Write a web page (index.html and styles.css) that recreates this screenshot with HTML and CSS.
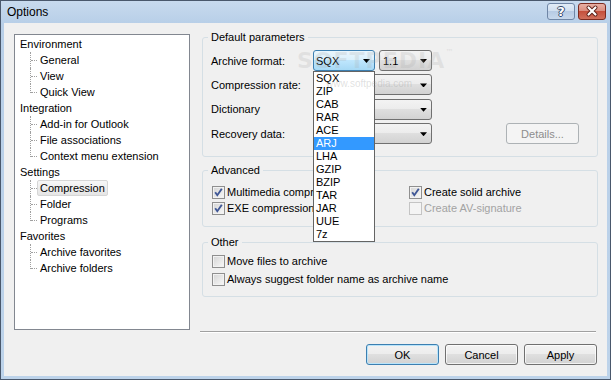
FILE: index.html
```html
<!DOCTYPE html>
<html>
<head>
<meta charset="utf-8">
<title>Options</title>
<link rel="stylesheet" href="styles.css">
</head>
<body>
<div class="window">
  <div class="titlebar">
    <span class="title">Options</span>
    <div class="caption-btns">
      <div class="cap help">?</div>
      <div class="cap close">
        <svg width="26" height="15" viewBox="0 0 26 15">
          <path d="M9.5 3.5 L16.5 10.5 M16.5 3.5 L9.5 10.5" stroke="#5b1f16" stroke-width="4" stroke-linecap="round"/>
          <path d="M9.5 3.5 L16.5 10.5 M16.5 3.5 L9.5 10.5" stroke="#ffffff" stroke-width="2.2" stroke-linecap="round"/>
        </svg>
      </div>
    </div>
  </div>
  <div class="client">
    <div class="tree">
      <ul class="root">
        <li><span class="node">Environment</span>
          <ul class="kids">
            <li><span class="node">General</span></li>
            <li><span class="node">View</span></li>
            <li><span class="node">Quick View</span></li>
          </ul>
        </li>
        <li><span class="node">Integration</span>
          <ul class="kids">
            <li><span class="node">Add-in for Outlook</span></li>
            <li><span class="node">File associations</span></li>
            <li><span class="node">Context menu extension</span></li>
          </ul>
        </li>
        <li><span class="node">Settings</span>
          <ul class="kids">
            <li><span class="node sel">Compression</span></li>
            <li><span class="node">Folder</span></li>
            <li><span class="node">Programs</span></li>
          </ul>
        </li>
        <li><span class="node">Favorites</span>
          <ul class="kids">
            <li><span class="node">Archive favorites</span></li>
            <li><span class="node">Archive folders</span></li>
          </ul>
        </li>
      </ul>
    </div>

    <div class="panel">
      <fieldset class="group g-default">
        <legend>Default parameters</legend>
        <div class="params">
          <div class="prow">
            <span class="plabel">Archive format:</span>
            <div class="combo-wrap">
              <div class="combo focus"><span>SQX</span><i class="arrow"></i></div>
              <ul class="droplist">
                <li>SQX</li>
                <li>ZIP</li>
                <li>CAB</li>
                <li>RAR</li>
                <li>ACE</li>
                <li class="hl">ARJ</li>
                <li>LHA</li>
                <li>GZIP</li>
                <li>BZIP</li>
                <li>TAR</li>
                <li>JAR</li>
                <li>UUE</li>
                <li>7z</li>
              </ul>
            </div>
            <div class="combo small"><span>1.1</span><i class="arrow"></i></div>
          </div>
          <div class="prow">
            <span class="plabel">Compression rate:</span>
            <div class="combo wide"><span></span><i class="arrow"></i></div>
          </div>
          <div class="prow">
            <span class="plabel">Dictionary</span>
            <div class="combo wide"><span></span><i class="arrow"></i></div>
          </div>
          <div class="prow">
            <span class="plabel">Recovery data:</span>
            <div class="combo wide"><span></span><i class="arrow"></i></div>
            <div class="btn disabled details">Details...</div>
          </div>
        </div>
      </fieldset>

      <fieldset class="group g-adv">
        <legend>Advanced</legend>
        <div class="checks">
          <label class="chk"><span class="box"><svg width="11" height="11" viewBox="0 0 11 11"><path d="M2.2 5.3 L4.3 8.2 L8.8 1.8" fill="none" stroke="#3f5796" stroke-width="1.9"/></svg></span>Multimedia compression</label>
          <label class="chk"><span class="box"><svg width="11" height="11" viewBox="0 0 11 11"><path d="M2.2 5.3 L4.3 8.2 L8.8 1.8" fill="none" stroke="#3f5796" stroke-width="1.9"/></svg></span>Create solid archive</label>
          <label class="chk"><span class="box"><svg width="11" height="11" viewBox="0 0 11 11"><path d="M2.2 5.3 L4.3 8.2 L8.8 1.8" fill="none" stroke="#3f5796" stroke-width="1.9"/></svg></span>EXE compression</label>
          <label class="chk dis"><span class="box"></span>Create AV-signature</label>
        </div>
      </fieldset>

      <fieldset class="group g-other">
        <legend>Other</legend>
        <div class="others">
          <label class="chk"><span class="box"></span>Move files to archive</label>
          <label class="chk"><span class="box"></span>Always suggest folder name as archive name</label>
        </div>
      </fieldset>

      <div class="sep"></div>

      <div class="btns">
        <div class="btn default">OK</div>
        <div class="btn">Cancel</div>
        <div class="btn">Apply</div>
      </div>
    </div>

    <div class="watermark">SOFTPEDIA<span class="tm">™</span></div>
    <div class="watermark-url">www.softpedia.com</div>
  </div>
</div>
</body>
</html>
```
FILE: styles.css
```css
* { box-sizing: border-box; }
html, body { margin: 0; padding: 0; }
body {
  width: 611px;
  height: 380px;
  overflow: hidden;
  font-family: "Liberation Sans", Arial, sans-serif;
  font-size: 11px;
  color: #000;
  background: #fff;
}

.window {
  width: 611px;
  height: 380px;
  border: 1px solid #4a586c;
  background: linear-gradient(#c8daee 0, #b8cfe8 22px, #bdd3ea 100%);
  padding: 0 3px 3px 3px;
  display: flex;
  flex-direction: column;
}

.titlebar {
  height: 22px;
  flex: none;
  display: flex;
  justify-content: space-between;
  align-items: flex-start;
}
.title {
  font-size: 12px;
  line-height: 22px;
  padding-left: 3px;
  color: #000;
}
.caption-btns {
  display: flex;
  gap: 3px;
  margin-top: 2px;
  margin-right: 1px;
}
.cap {
  width: 28px;
  height: 17px;
  border-radius: 3px;
  display: flex;
  align-items: center;
  justify-content: center;
}
.help {
  border: 1px solid #6f86a6;
  background: linear-gradient(#e2ecf7 0, #cfdeef 50%, #b7cbe4 50%, #c7d8ec 100%);
  color: #fff;
  font-weight: bold;
  font-size: 13px;
  font-family: "DejaVu Sans", sans-serif;
  text-shadow: 1px 0 0 #34496a, -1px 0 0 #34496a, 0 1px 0 #34496a, 0 -1px 0 #34496a;
}
.close {
  border: 1px solid #7c2b20;
  background: linear-gradient(#e8b0a4 0, #d98a7b 50%, #c5503c 50%, #d0705c 100%);
}

.client {
  flex: 1;
  background: #f0f0f0;
  display: grid;
  grid-template-columns: 176px 396px;
  column-gap: 12px;
  align-items: start;
  padding: 8px 0 0 10px;
  position: relative;
}

/* tree */
.tree {
  margin-top: 3px;
  height: 296px;
  border: 1px solid #828790;
  background: #fff;
  padding: 1px 0 0 2px;
}
.tree ul { list-style: none; margin: 0; padding: 0; }
.node {
  display: block;
  width: max-content;
  height: 16px;
  line-height: 14px;
  padding: 0 2px;
  border: 1px solid transparent;
  border-radius: 2px;
  white-space: nowrap;
}
.node.sel {
  background: linear-gradient(#f7f7f7, #e5e5e5);
  border-color: #d6d6d6;
}
.tree .kids { padding-left: 20px; }
.kids > li { position: relative; }
.kids > li::before {
  content: "";
  position: absolute;
  left: -7px;
  top: 0;
  height: 100%;
  border-left: 1px dotted #a0a0a0;
}
.kids > li:last-child::before { height: 9px; }
.kids > li::after {
  content: "";
  position: absolute;
  left: -6px;
  top: 8px;
  width: 6px;
  border-top: 1px dotted #a0a0a0;
}

/* right panel */
.panel {
  display: flex;
  flex-direction: column;
}
.group {
  margin: 0;
  padding: 0;
  min-width: 0;
  border: 1px solid #d5dfe5;
  border-radius: 3px;
}
.group legend {
  margin-left: 5px;
  padding: 0 3px;
  height: 13px;
  line-height: 13px;
}
.g-default { height: 126px; }
.g-adv { height: 63px; margin-top: 7px; }
.g-other { height: 61px; margin-top: 9px; }

.params {
  padding: 6px 0 0 8px;
  display: flex;
  flex-direction: column;
  gap: 3.4px;
}
.prow {
  display: flex;
  align-items: center;
  height: 21px;
}
.plabel { width: 102px; flex: none; }

.combo-wrap {
  position: relative;
  width: 62px;
  margin-right: 4px;
}
.combo {
  position: relative;
  height: 21px;
  border: 1px solid #707070;
  border-radius: 3px;
  background: linear-gradient(#f3f3f3 0, #ececec 50%, #dfdfdf 50%, #d2d2d2 100%);
  display: flex;
  align-items: center;
  padding-left: 2px;
}
.combo.focus {
  border-color: #3c7fb1;
  background: linear-gradient(#eaf6fd 0, #d9f0fc 50%, #bee6fd 50%, #a7d9f5 100%);
}
.combo.small { width: 53px; padding-left: 3px; }
.combo.wide { width: 119px; }
.arrow {
  position: absolute;
  right: 4px;
  top: 8px;
  width: 7px;
  height: 4px;
  background: #000;
  clip-path: polygon(0 0, 100% 0, 50% 100%);
}

.droplist {
  position: absolute;
  left: 0;
  top: 21px;
  width: 62px;
  margin: 0;
  padding: 0;
  list-style: none;
  background: #fff;
  border: 1px solid #646464;
  z-index: 5;
}
.droplist li {
  height: 13px;
  line-height: 13px;
  padding-left: 2px;
}
.droplist li.hl {
  background: #3399ff;
  color: #fff;
}

.btn {
  width: 73px;
  height: 21px;
  border: 1px solid #707070;
  border-radius: 3px;
  background: linear-gradient(#f3f3f3 0, #ececec 50%, #dfdfdf 50%, #d2d2d2 100%);
  box-shadow: inset 0 0 0 1px rgba(255, 255, 255, 0.7);
  display: flex;
  align-items: center;
  justify-content: center;
  flex: none;
}
.btn.default {
  border-color: #3c7fb1;
  box-shadow: inset 0 0 0 1px #b9e4fa;
}
.btn.disabled {
  border-color: #adb2b5;
  background: #f4f4f4;
  box-shadow: none;
  color: #8d8d8d;
}
.details { margin-left: auto; margin-right: 18px; }

.checks {
  padding: 7px 0 0 9px;
  display: grid;
  grid-template-columns: 197px auto;
  grid-auto-rows: 16px;
}
.others {
  padding: 3px 0 0 9px;
  display: grid;
  grid-auto-rows: 18px;
}
.chk {
  display: flex;
  align-items: center;
  gap: 2px;
  white-space: nowrap;
}
.box {
  width: 13px;
  height: 13px;
  flex: none;
  border: 1px solid #8f8f8f;
  background: linear-gradient(135deg, #d4d4d4, #f9f9f9);
  box-shadow: inset 0 0 0 1px #f2f2f2;
  display: flex;
}
.chk.dis { color: #a3a3a3; }
.chk.dis .box {
  border-color: #c4c4c4;
  background: #f4f4f4;
  box-shadow: none;
}

.sep {
  margin: 34px 2px 0 -2px;
  height: 2px;
  border-top: 1px solid #a0a0a0;
  border-bottom: 1px solid #ffffff;
}
.btns {
  margin-top: 11px;
  display: flex;
  justify-content: flex-end;
  gap: 6px;
  padding-right: 1px;
}

.watermark {
  position: absolute;
  left: 293px;
  top: 25px;
  font-family: "DejaVu Sans", sans-serif;
  font-weight: bold;
  font-size: 22px;
  letter-spacing: 1px;
  color: rgba(170, 170, 170, 0.22);
  pointer-events: none;
  z-index: 6;
}
.watermark .tm { font-size: 8px; vertical-align: top; }
.watermark-url {
  position: absolute;
  left: 322px;
  top: 55px;
  font-size: 10px;
  color: rgba(150, 150, 150, 0.3);
  pointer-events: none;
  z-index: 6;
}
```
